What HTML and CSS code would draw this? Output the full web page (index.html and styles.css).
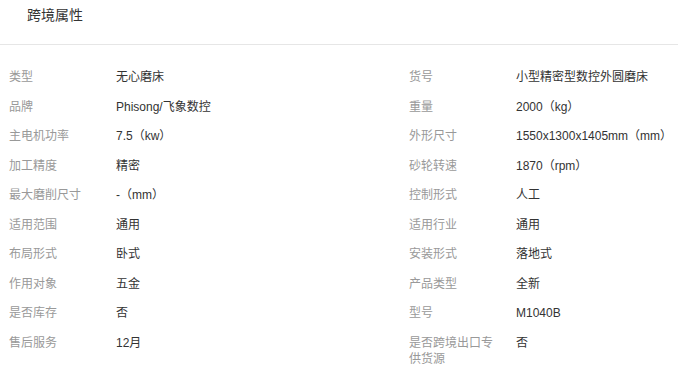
FILE: index.html
```html
<!DOCTYPE html>
<html lang="zh">
<head>
<meta charset="utf-8">
<link rel="stylesheet" href="styles.css">
</head>
<body>
<div class="panel">
  <div class="header"><span class="title">跨境属性</span></div>
  <div class="grid">
    <div class="cell"><span class="label">类型</span><span class="value">无心磨床</span></div>
    <div class="cell"><span class="label">货号</span><span class="value">小型精密型数控外圆磨床</span></div>
    <div class="cell"><span class="label">品牌</span><span class="value">Phisong/飞象数控</span></div>
    <div class="cell"><span class="label">重量</span><span class="value">2000（kg）</span></div>
    <div class="cell"><span class="label">主电机功率</span><span class="value">7.5（kw）</span></div>
    <div class="cell"><span class="label">外形尺寸</span><span class="value">1550x1300x1405mm（mm）</span></div>
    <div class="cell"><span class="label">加工精度</span><span class="value">精密</span></div>
    <div class="cell"><span class="label">砂轮转速</span><span class="value">1870（rpm）</span></div>
    <div class="cell"><span class="label">最大磨削尺寸</span><span class="value">-（mm）</span></div>
    <div class="cell"><span class="label">控制形式</span><span class="value">人工</span></div>
    <div class="cell"><span class="label">适用范围</span><span class="value">通用</span></div>
    <div class="cell"><span class="label">适用行业</span><span class="value">通用</span></div>
    <div class="cell"><span class="label">布局形式</span><span class="value">卧式</span></div>
    <div class="cell"><span class="label">安装形式</span><span class="value">落地式</span></div>
    <div class="cell"><span class="label">作用对象</span><span class="value">五金</span></div>
    <div class="cell"><span class="label">产品类型</span><span class="value">全新</span></div>
    <div class="cell"><span class="label">是否库存</span><span class="value">否</span></div>
    <div class="cell"><span class="label">型号</span><span class="value">M1040B</span></div>
    <div class="cell"><span class="label">售后服务</span><span class="value">12月</span></div>
    <div class="cell"><span class="label">是否跨境出口专供货源</span><span class="value">否</span></div>
  </div>
</div>
</body>
</html>
```
FILE: styles.css
```css
html, body {
  margin: 0;
  padding: 0;
  overflow: hidden;
  background: #fff;
}
body {
  font-family: "Liberation Sans", Arial, "Noto Sans CJK SC", sans-serif;
  color: #333;
}
.panel {
  width: 100%;
}
.header {
  height: 44px;
  border-bottom: 1px solid #e6e6e6;
  padding-left: 27px;
  display: flex;
  align-items: center;
}
.title {
  font-size: 14px;
  line-height: 20px;
  color: #333;
  margin-top: -15px;
}
.grid {
  display: grid;
  grid-template-columns: 400px minmax(0, 1fr);
  padding-top: 24px;
}
.cell {
  display: flex;
  align-items: flex-start;
  padding: 0 0 0 9px;
  height: 29.55px;
  font-size: 12px;
  line-height: 16.5px;
  min-width: 0;
}
.label {
  width: 90px;
  flex: none;
  color: #999;
  margin-right: 17px;
}
.value {
  color: #333;
  white-space: nowrap;
}
```
